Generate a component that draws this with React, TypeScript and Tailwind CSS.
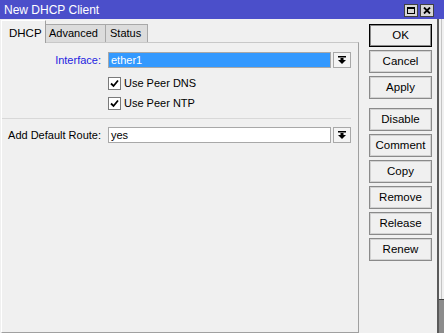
import React from "react";

const DropIcon = () => (
  <svg width="8" height="8" viewBox="0 0 8 8">
    <rect x="0" y="0" width="8" height="1.5" fill="#000" />
    <rect x="2.5" y="2" width="3" height="2" fill="#000" />
    <polygon points="0,4 8,4 4,8" fill="#000" />
  </svg>
);

const Check = () => (
  <div className="w-[13px] h-[13px] bg-white border border-[#7a7a7a] flex items-center justify-center">
    <svg width="9" height="9" viewBox="0 0 9 9">
      <path d="M1 4.5 L3.5 7 L8 1.5" stroke="#000" strokeWidth="1.8" fill="none" />
    </svg>
  </div>
);

const Btn = ({ label, main, extra }: { label: string; main?: boolean; extra?: string }) => (
  <div
    className={
      "w-[63px] h-[23px] flex items-center justify-center text-[11.5px] text-black bg-[#f0f0f0] " +
      (main
        ? "border border-black shadow-[inset_0_0_0_1px_#8a8a8a]"
        : "border border-[#8a8a8a] shadow-[inset_0_0_0_1px_#d2d2d2]") +
      (extra ? " " + extra : "")
    }
  >
    {label}
  </div>
);

const App = () => {
  return (
    <div className="w-[444px] h-[333px] overflow-hidden bg-[#f0f0f0] flex flex-col font-['Liberation_Sans',Arial,sans-serif] text-[11px] text-black">
      {/* title bar */}
      <div className="h-[19px] w-full bg-[#4b4fca] flex items-center justify-between pl-[4px] pr-[10px]">
        <span className="text-white text-[12px] leading-none">New DHCP Client</span>
        <div className="flex gap-[2px] mt-[1px]">
          <div className="w-[14px] h-[13px] bg-[#d6d6d6] border border-[#404040] flex items-center justify-center">
            <div className="w-[8px] h-[7px] border border-black border-t-2"></div>
          </div>
          <div className="w-[14px] h-[13px] bg-[#d6d6d6] border border-[#404040] flex items-center justify-center">
            <svg width="8" height="7" viewBox="0 0 8 7">
              <path d="M1 0.5 L7 6.5 M7 0.5 L1 6.5" stroke="#000" strokeWidth="1.8" />
            </svg>
          </div>
        </div>
      </div>

      <div className="flex flex-1">
        {/* left: tabs + panel */}
        <div className="w-[359px] flex flex-col pl-[1px]">
          <div className="h-[23px] flex items-end">
            <div className="h-[23px] w-[45px] bg-[#f0f0f0] border-t border-l border-white border-r border-r-[#a0a0a0] flex items-start pt-[4px] pl-[7px] text-[11.5px] relative z-10 -mb-[1px]">
              DHCP
            </div>
            <div className="h-[18px] w-[60px] bg-[#dcdcdc] border-t border-r border-[#a8a8a8] flex items-center pl-[3px]">
              Advanced
            </div>
            <div className="h-[18px] w-[42px] bg-[#dcdcdc] border-t border-r border-[#a8a8a8] flex items-center pl-[4px]">
              Status
            </div>
          </div>
          <div className="flex-1 border-t border-t-[#c8c8c8] border-l border-l-white border-r border-r-[#a0a0a0] border-b border-b-[#a0a0a0] flex flex-col pt-[9px]">
            <div className="flex items-center h-[16px] leading-[16px]">
              <div className="w-[106px] text-right pr-[7px] text-[#2323e0]">Interface:</div>
              <div className="w-[223px] h-[16px] bg-[#3399ff] border border-[#a8a8a8] text-white flex items-center pl-[2px]">
                ether1
              </div>
              <div className="ml-[2px] w-[18px] h-[16px] bg-[#f4f4f4] border border-[#a8a8a8] flex items-center justify-center">
                <DropIcon />
              </div>
            </div>
            <div className="flex items-center gap-[3px] ml-[106px] mt-[9px] h-[13px] leading-[13px]">
              <Check />
              <span>Use Peer DNS</span>
            </div>
            <div className="flex items-center gap-[3px] ml-[106px] mt-[7px] h-[13px] leading-[13px]">
              <Check />
              <span>Use Peer NTP</span>
            </div>
            <div className="mt-[8px] w-[349px] h-[1px] bg-[#d8d8d8]"></div>
            <div className="flex items-center h-[16px] leading-[16px] mt-[8px]">
              <div className="w-[106px] text-right pr-[7px]">Add Default Route:</div>
              <div className="w-[223px] h-[16px] bg-white border border-[#a8a8a8] flex items-center pl-[2px]">
                yes
              </div>
              <div className="ml-[2px] w-[18px] h-[16px] bg-[#f4f4f4] border border-[#a8a8a8] flex items-center justify-center">
                <DropIcon />
              </div>
            </div>
          </div>
        </div>

        {/* right: buttons */}
        <div className="ml-[10px] w-[63px] flex flex-col gap-[3px] pt-[5px]">
          <Btn label="OK" main />
          <Btn label="Cancel" />
          <Btn label="Apply" />
          <Btn label="Disable" extra="mt-[6px]" />
          <Btn label="Comment" />
          <Btn label="Copy" />
          <Btn label="Remove" />
          <Btn label="Release" />
          <Btn label="Renew" />
        </div>

        {/* window edge */}
        <div className="ml-[5px] w-[7px] flex flex-col">
          <div className="flex-1 flex">
            <div className="w-[2px] bg-[#5a5a5a]"></div>
            <div className="w-[2px] bg-[#f0f0f0]"></div>
            <div className="w-[1px] bg-[#c4c4c4]"></div>
            <div className="flex-1 bg-[#f0f0f0]"></div>
          </div>
          <div className="h-[34px] flex">
            <div className="w-[2px] bg-[#5a5a5a]"></div>
            <div className="flex-1 bg-[#8c8c8c] border-t border-[#404040]"></div>
          </div>
        </div>
      </div>
    </div>
  );
};

export default App;
